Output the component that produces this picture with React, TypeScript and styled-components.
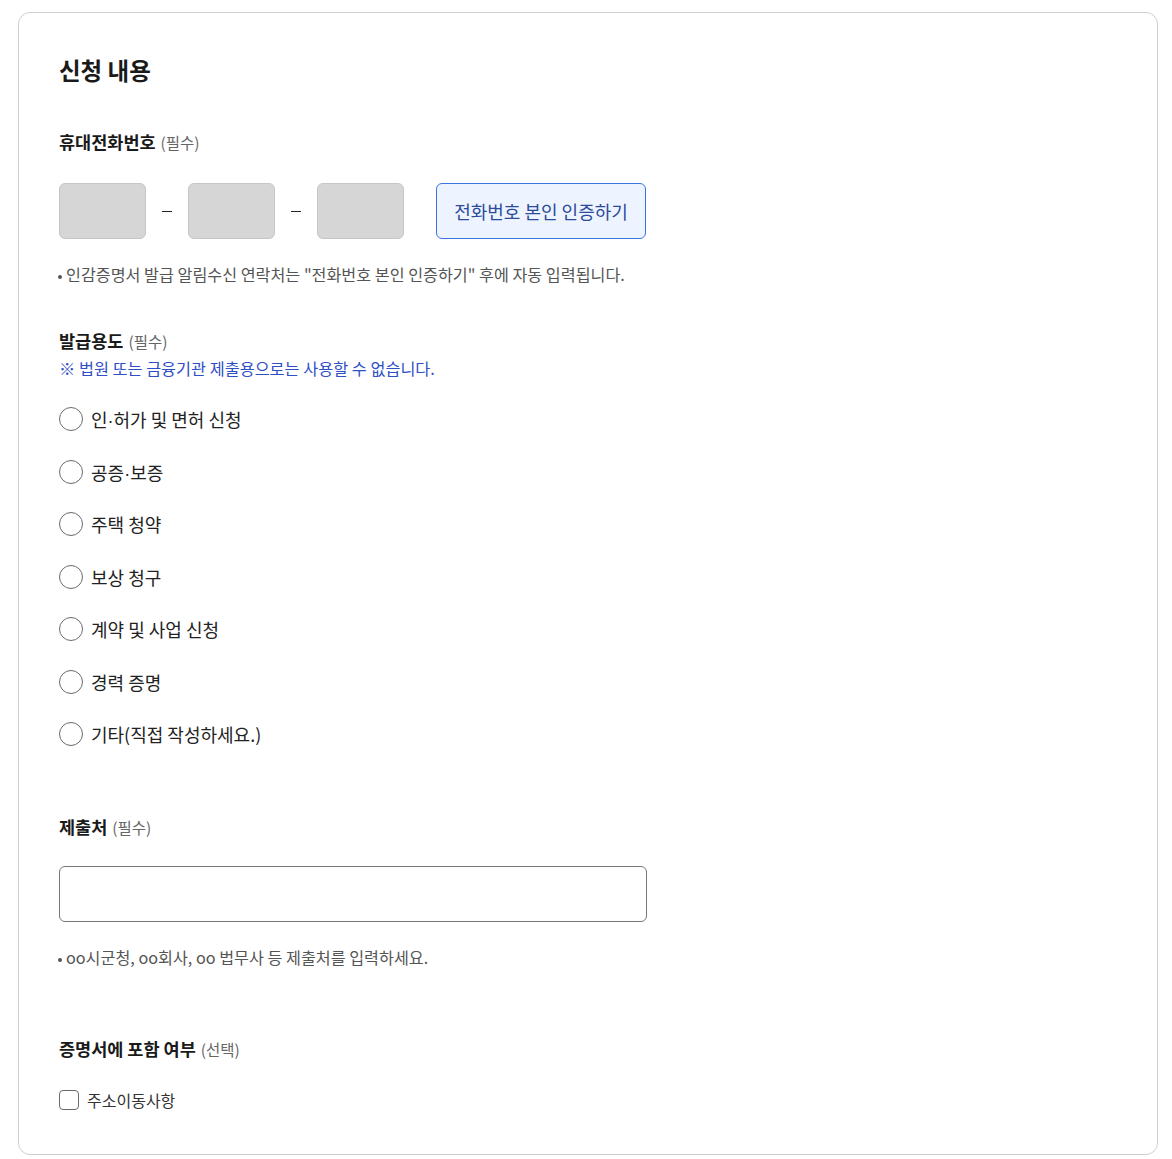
import React, { useState } from 'react';
import styled, { createGlobalStyle } from 'styled-components';

const GlobalStyle = createGlobalStyle`
  body {
    margin: 0;
    background: #fff;
    font-family: "Noto Sans CJK KR", "Noto Sans", sans-serif;
    color: #222;
  }
`;

const Card = styled.section`
  box-sizing: border-box;
  width: 1140px;
  height: 1143px;
  margin: 12px 0 0 18px;
  padding: 41px 40px;
  border: 1px solid #cfcfcf;
  border-radius: 12px;
  display: flex;
  flex-direction: column;
`;

const Title = styled.h2`
  margin: 0;
  font-size: 23.5px;
  line-height: 32px;
  font-weight: 700;
  color: #1a1a1a;
`;

const Label = styled.div<{ $top: number }>`
  margin-top: ${(p) => p.$top}px;
  font-size: 17.5px;
  line-height: 24px;
  font-weight: 700;
  color: #1a1a1a;
`;

const Sub = styled.span`
  font-size: 15.5px;
  font-weight: 400;
  color: #666;
  margin-left: 5px;
`;

const PhoneRow = styled.div`
  margin-top: 29px;
  display: flex;
  align-items: center;
`;

const PhoneBox = styled.input`
  box-sizing: border-box;
  width: 87px;
  height: 56px;
  border: 1px solid #c6c6c6;
  border-radius: 6px;
  background: #d6d6d6;
  outline: none;
`;

const Dash = styled.span`
  width: 42px;
  display: flex;
  justify-content: center;
  &::after {
    content: '';
    width: 10px;
    height: 1px;
    background: #222;
  }
`;

const VerifyButton = styled.button`
  box-sizing: border-box;
  margin-left: 32px;
  width: 210px;
  height: 56px;
  border: 1px solid #3a74e0;
  border-radius: 6px;
  background: #eef4ff;
  color: #2b4a9a;
  font-family: inherit;
  font-size: 18px;
  cursor: pointer;
`;

const Note = styled.p<{ $top: number }>`
  margin: ${(p) => p.$top}px 0 0 -1px;
  font-size: 16.2px;
  line-height: 22px;
  height: 22px;
  color: #555;
  &::before {
    content: '';
    display: inline-block;
    width: 4px;
    height: 4px;
    border-radius: 50%;
    background: #555;
    margin-right: 4px;
    vertical-align: middle;
  }
`;

const Warning = styled.p`
  margin: 4px 0 0;
  font-size: 16.3px;
  line-height: 22px;
  color: #2f4fc5;
`;

const RadioList = styled.div`
  margin-top: 24px;
  display: flex;
  flex-direction: column;
  gap: 20.5px;
`;

const RadioRow = styled.label`
  display: flex;
  align-items: center;
  gap: 8px;
  height: 32px;
  font-size: 18px;
  color: #222;
  cursor: pointer;
`;

const MidDot = styled.span`
  font-family: "Liberation Sans", sans-serif;
`;

const Circle = styled.span<{ $on: boolean }>`
  box-sizing: border-box;
  flex: none;
  width: 24px;
  height: 24px;
  border-radius: 50%;
  border: 1.5px solid ${(p) => (p.$on ? '#2b62d9' : '#6a6a6a')};
  display: flex;
  align-items: center;
  justify-content: center;
  &::after {
    content: '';
    width: 12px;
    height: 12px;
    border-radius: 50%;
    background: ${(p) => (p.$on ? '#2b62d9' : 'transparent')};
  }
`;

const TextInput = styled.input`
  box-sizing: border-box;
  margin-top: 27px;
  width: 588px;
  height: 56px;
  border: 1px solid #777;
  border-radius: 6px;
  padding: 0 16px;
  font-family: inherit;
  font-size: 16px;
  outline: none;
`;

const CheckRow = styled.label`
  margin-top: 27px;
  display: flex;
  align-items: center;
  gap: 8px;
  height: 24px;
  font-size: 16px;
  color: #333;
  cursor: pointer;
`;

const Box = styled.span<{ $on: boolean }>`
  box-sizing: border-box;
  flex: none;
  width: 20px;
  height: 20px;
  border: 1.5px solid #6a6a6a;
  border-radius: 4px;
  background: ${(p) => (p.$on ? '#2b62d9' : '#fff')};
`;

const purposes: [string, string?][] = [
  ['인', '허가 및 면허 신청'],
  ['공증', '보증'],
  ['주택 청약'],
  ['보상 청구'],
  ['계약 및 사업 신청'],
  ['경력 증명'],
  ['기타(직접 작성하세요.)'],
];

export default function App() {
  const [purpose, setPurpose] = useState<number | null>(null);
  const [address, setAddress] = useState(false);

  return (
    <>
      <GlobalStyle />
      <Card>
        <Title>신청 내용</Title>

        <Label $top={44}>
          휴대전화번호<Sub>(필수)</Sub>
        </Label>
        <PhoneRow>
          <PhoneBox disabled />
          <Dash />
          <PhoneBox disabled />
          <Dash />
          <PhoneBox disabled />
          <VerifyButton>전화번호 본인 인증하기</VerifyButton>
        </PhoneRow>
        <Note $top={24}>인감증명서 발급 알림수신 연락처는 "전화번호 본인 인증하기" 후에 자동 입력됩니다.</Note>

        <Label $top={44}>
          발급용도<Sub>(필수)</Sub>
        </Label>
        <Warning>※ 법원 또는 금융기관 제출용으로는 사용할 수 없습니다.</Warning>
        <RadioList>
          {purposes.map(([a, b], i) => (
            <RadioRow key={a + (b ?? '')} onClick={() => setPurpose(i)}>
              <Circle $on={purpose === i} />
              <span>
                {a}
                {b && (
                  <>
                    <MidDot>·</MidDot>
                    {b}
                  </>
                )}
              </span>
            </RadioRow>
          ))}
        </RadioList>

        <Label $top={65}>
          제출처<Sub>(필수)</Sub>
        </Label>
        <TextInput />
        <Note $top={24}>oo시군청, oo회사, oo 법무사 등 제출처를 입력하세요.</Note>

        <Label $top={69}>
          증명서에 포함 여부<Sub>(선택)</Sub>
        </Label>
        <CheckRow onClick={() => setAddress(!address)}>
          <Box $on={address} />
          주소이동사항
        </CheckRow>
      </Card>
    </>
  );
}
